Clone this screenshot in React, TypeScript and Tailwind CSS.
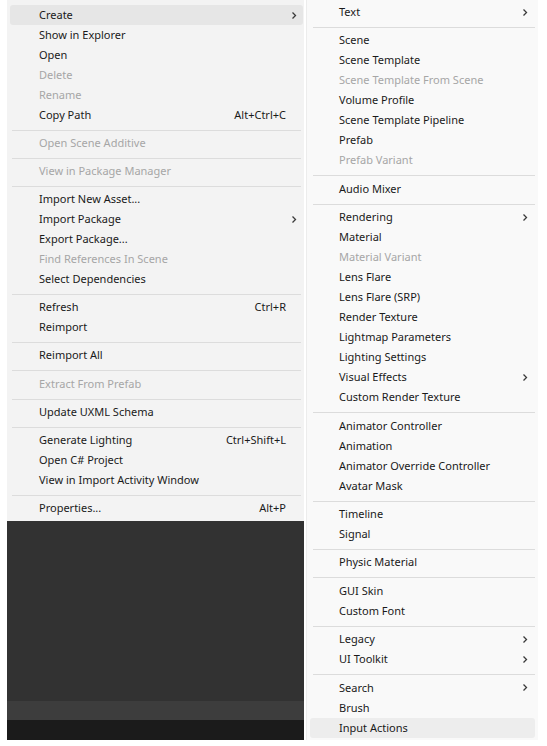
import React from "react";

type Item =
  | { sep: true }
  | { label: string; shortcut?: string; sub?: boolean; disabled?: boolean; hl?: boolean };

const S: Item = { sep: true };

const leftItems: Item[] = [
  { label: "Create", sub: true, hl: true },
  { label: "Show in Explorer" },
  { label: "Open" },
  { label: "Delete", disabled: true },
  { label: "Rename", disabled: true },
  { label: "Copy Path", shortcut: "Alt+Ctrl+C" },
  S,
  { label: "Open Scene Additive", disabled: true },
  S,
  { label: "View in Package Manager", disabled: true },
  S,
  { label: "Import New Asset..." },
  { label: "Import Package", sub: true },
  { label: "Export Package..." },
  { label: "Find References In Scene", disabled: true },
  { label: "Select Dependencies" },
  S,
  { label: "Refresh", shortcut: "Ctrl+R" },
  { label: "Reimport" },
  S,
  { label: "Reimport All" },
  S,
  { label: "Extract From Prefab", disabled: true },
  S,
  { label: "Update UXML Schema" },
  S,
  { label: "Generate Lighting", shortcut: "Ctrl+Shift+L" },
  { label: "Open C# Project" },
  { label: "View in Import Activity Window" },
  S,
  { label: "Properties...", shortcut: "Alt+P" },
];

const rightItems: Item[] = [
  { label: "Text", sub: true },
  S,
  { label: "Scene" },
  { label: "Scene Template" },
  { label: "Scene Template From Scene", disabled: true },
  { label: "Volume Profile" },
  { label: "Scene Template Pipeline" },
  { label: "Prefab" },
  { label: "Prefab Variant", disabled: true },
  S,
  { label: "Audio Mixer" },
  S,
  { label: "Rendering", sub: true },
  { label: "Material" },
  { label: "Material Variant", disabled: true },
  { label: "Lens Flare" },
  { label: "Lens Flare (SRP)" },
  { label: "Render Texture" },
  { label: "Lightmap Parameters" },
  { label: "Lighting Settings" },
  { label: "Visual Effects", sub: true },
  { label: "Custom Render Texture" },
  S,
  { label: "Animator Controller" },
  { label: "Animation" },
  { label: "Animator Override Controller" },
  { label: "Avatar Mask" },
  S,
  { label: "Timeline" },
  { label: "Signal" },
  S,
  { label: "Physic Material" },
  S,
  { label: "GUI Skin" },
  { label: "Custom Font" },
  S,
  { label: "Legacy", sub: true },
  { label: "UI Toolkit", sub: true },
  S,
  { label: "Search", sub: true },
  { label: "Brush" },
  { label: "Input Actions", hl: true },
];

function Chevron() {
  return (
    <svg width="6" height="9" viewBox="0 0 6 9" className="block">
      <path d="M1.5 1.5 L4.5 4.5 L1.5 7.5" fill="none" stroke="#3a3a3a" strokeWidth="1.3" />
    </svg>
  );
}

function Menu({ items, side }: { items: Item[]; side: "left" | "right" }) {
  const left = side === "left";
  return (
    <div className="flex flex-col">
      {items.map((it, i) => {
        if ("sep" in it) {
          return left ? (
            <div key={i} className="h-[8.1px] pt-[5px] pl-[5px] pr-[3px]">
              <div className="h-px bg-[#dcdcdc]" />
            </div>
          ) : (
            <div key={i} className="h-[8.4px] pt-[5px] pl-[6px] pr-[3px]">
              <div className="h-px bg-[#dcdcdc]" />
            </div>
          );
        }
        return (
          <div
            key={i}
            className={
              (left ? "mx-[3px] mr-[1px] pl-[29px] pr-[17px] " : "mx-[3px] pl-[29px] pr-[7px] ") +
              "h-[20px] flex items-center rounded-[3px] " +
              (it.hl ? (left ? "bg-[#e6e6e6] " : "bg-[#ededed] ") : "") +
              (it.disabled ? "text-[#a6a6a6]" : "text-[#1a1a1a]")
            }
          >
            <span className="flex-1 whitespace-nowrap">{it.label}</span>
            {it.shortcut && <span className="whitespace-nowrap">{it.shortcut}</span>}
            {it.sub && (
              <span className={left ? "mr-[-11px]" : ""}>
                <Chevron />
              </span>
            )}
          </div>
        );
      })}
    </div>
  );
}

export default function App() {
  return (
    <div
      className="w-[547px] h-[746px] bg-white flex text-[11px] leading-[20px] overflow-hidden"
      style={{ fontFamily: '"Noto Sans", sans-serif' }}
    >
      <div className="ml-[7px] w-[297px] h-[740px] flex flex-col">
        <div className="bg-[#f3f3f3] pt-[5px] h-[521px]">
          <Menu items={leftItems} side="left" />
        </div>
        <div className="flex-1 bg-[#323232]" />
        <div className="h-[19px] bg-[#3d3d3d]" />
        <div className="h-[20px] bg-[#1b1b1b]" />
      </div>
      <div className="ml-[2px] w-[232px] h-[740px] bg-[#f9f9f9] border-l border-[#ececec] pt-[2px]">
        <Menu items={rightItems} side="right" />
      </div>
    </div>
  );
}
